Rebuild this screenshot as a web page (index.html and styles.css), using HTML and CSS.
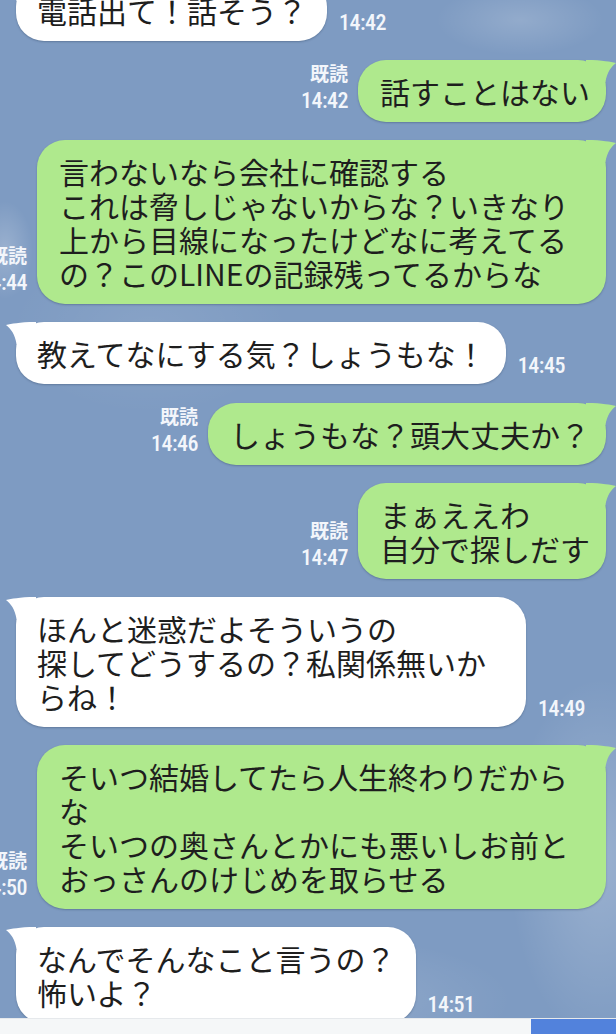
FILE: index.html
```html
<!DOCTYPE html>
<html lang="ja">
<head>
<meta charset="utf-8">
<title>LINE</title>
<link rel="stylesheet" href="styles.css">
</head>
<body>
<div class="screen">
  <div class="chat">
    <div class="list">
      <div class="row in">
        <div class="bubble">電話出て！話そう？<svg class="tail" viewBox="0 0 30 30"><path d="M0 3 C6 2 12 0 30 0 L30 30 L10.5 22 C9 12 5 7 0 3 Z"/></svg></div>
        <div class="meta"><span class="time">14:42</span></div>
      </div>
      <div class="row out">
        <div class="meta"><span class="read">既読</span><span class="time">14:42</span></div>
        <div class="bubble">話すことはない<svg class="tail" viewBox="0 0 30 30"><path d="M0 3 C6 2 12 0 30 0 L30 30 L10.5 22 C9 12 5 7 0 3 Z"/></svg></div>
      </div>
      <div class="row out">
        <div class="meta"><span class="read">既読</span><span class="time">14:44</span></div>
        <div class="bubble wide">言わないなら会社に確認する<br>これは脅しじゃないからな？いきなり<br>上から目線になったけどなに考えてる<br>の？このLINEの記録残ってるからな<svg class="tail" viewBox="0 0 30 30"><path d="M0 3 C6 2 12 0 30 0 L30 30 L10.5 22 C9 12 5 7 0 3 Z"/></svg></div>
      </div>
      <div class="row in">
        <div class="bubble">教えてなにする気？しょうもな！<svg class="tail" viewBox="0 0 30 30"><path d="M0 3 C6 2 12 0 30 0 L30 30 L10.5 22 C9 12 5 7 0 3 Z"/></svg></div>
        <div class="meta"><span class="time">14:45</span></div>
      </div>
      <div class="row out">
        <div class="meta"><span class="read">既読</span><span class="time">14:46</span></div>
        <div class="bubble">しょうもな？頭大丈夫か？<svg class="tail" viewBox="0 0 30 30"><path d="M0 3 C6 2 12 0 30 0 L30 30 L10.5 22 C9 12 5 7 0 3 Z"/></svg></div>
      </div>
      <div class="row out">
        <div class="meta"><span class="read">既読</span><span class="time">14:47</span></div>
        <div class="bubble">まぁええわ<br>自分で探しだす<svg class="tail" viewBox="0 0 30 30"><path d="M0 3 C6 2 12 0 30 0 L30 30 L10.5 22 C9 12 5 7 0 3 Z"/></svg></div>
      </div>
      <div class="row in">
        <div class="bubble wide">ほんと迷惑だよそういうの<br>探してどうするの？私関係無いか<br>らね！<svg class="tail" viewBox="0 0 30 30"><path d="M0 3 C6 2 12 0 30 0 L30 30 L10.5 22 C9 12 5 7 0 3 Z"/></svg></div>
        <div class="meta"><span class="time">14:49</span></div>
      </div>
      <div class="row out">
        <div class="meta"><span class="read">既読</span><span class="time">14:50</span></div>
        <div class="bubble wide">そいつ結婚してたら人生終わりだから<br>な<br>そいつの奥さんとかにも悪いしお前と<br>おっさんのけじめを取らせる<svg class="tail" viewBox="0 0 30 30"><path d="M0 3 C6 2 12 0 30 0 L30 30 L10.5 22 C9 12 5 7 0 3 Z"/></svg></div>
      </div>
      <div class="row in">
        <div class="bubble">なんでそんなこと言うの？<br>怖いよ？<svg class="tail" viewBox="0 0 30 30"><path d="M0 3 C6 2 12 0 30 0 L30 30 L10.5 22 C9 12 5 7 0 3 Z"/></svg></div>
        <div class="meta"><span class="time">14:51</span></div>
      </div>
    </div>
  </div>
  <div class="bar"><div class="bar-btn"></div></div>
</div>
</body>
</html>
```

FILE: styles.css
```css
html, body {
  margin: 0;
  padding: 0;
}
body {
  width: 616px;
  height: 1034px;
  overflow: hidden;
  font-family: "Noto Sans CJK JP", "Noto Sans", sans-serif;
}
.screen {
  width: 616px;
  height: 1034px;
  display: flex;
  flex-direction: column;
  background-color: #7e9bc2;
  background-image:
    radial-gradient(ellipse 120px 50px at 520px 20px, rgba(255,255,255,0.16), rgba(255,255,255,0) 70%),
    radial-gradient(ellipse 40px 70px at 5px 250px, rgba(255,255,255,0.22), rgba(255,255,255,0) 70%),
    radial-gradient(ellipse 130px 260px at 600px 860px, rgba(255,255,255,0.22), rgba(255,255,255,0) 70%),
    radial-gradient(ellipse 260px 90px at 330px 1000px, rgba(255,255,255,0.14), rgba(255,255,255,0) 70%),
    radial-gradient(ellipse 200px 120px at 150px 330px, rgba(255,255,255,0.08), rgba(255,255,255,0) 70%);
}
.chat {
  flex: 1;
  overflow: hidden;
  min-height: 0;
}
.list {
  margin-top: -21px;
  display: flex;
  flex-direction: column;
  gap: 18px;
}
.row {
  display: flex;
  align-items: flex-end;
  gap: 12px;
}
.row.in {
  justify-content: flex-start;
  padding-left: 16px;
}
.row.out {
  justify-content: flex-end;
  padding-right: 10px;
  gap: 10px;
}
.bubble {
  position: relative;
  flex-shrink: 0;
  box-sizing: border-box;
  padding: 14px 20px 14px 21px;
  border-radius: 28px;
  font-size: 30px;
  line-height: 34px;
  color: #1e1e1e;
  white-space: nowrap;
  box-shadow: 0 1px 2px rgba(40, 60, 90, 0.35);
}
.row.in .bubble {
  background: #ffffff;
}
.row.out .bubble {
  background: #afe98d;
  padding-left: 22px;
  padding-right: 16px;
}
.row.in .bubble.wide {
  width: 510px;
}
.row.out .bubble.wide {
  width: 569px;
}
.tail {
  position: absolute;
  top: 0;
  width: 30px;
  height: 30px;
}
.row.in .tail {
  left: -10px;
  fill: #ffffff;
}
.row.out .tail {
  right: -10px;
  fill: #afe98d;
  transform: scaleX(-1);
}
.meta {
  flex-shrink: 0;
  display: flex;
  flex-direction: column;
  color: #f3f6fb;
  font-size: 20px;
  line-height: 28px;
}
.row.out .meta {
  align-items: flex-end;
  padding-bottom: 7px;
}
.row.in .meta {
  padding-bottom: 4px;
}
.read {
  font-weight: 700;
  font-size: 19px;
}
.time {
  font-family: "Roboto", "Noto Sans", sans-serif;
  font-stretch: 75%;
  font-weight: 500;
  font-size: 22px;
  letter-spacing: -0.5px;
}
.bar {
  flex: 0 0 15px;
  display: flex;
  justify-content: flex-end;
  background: #f5f7f8;
  border-top: 1px solid #e6e9ec;
}
.bar-btn {
  width: 85px;
  background: #5282dc;
}
```
